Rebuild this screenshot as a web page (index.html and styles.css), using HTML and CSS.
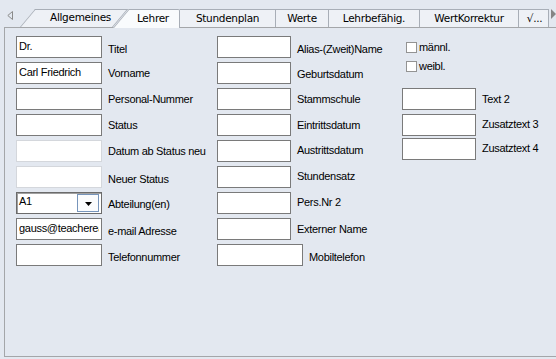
FILE: index.html
```html
<!DOCTYPE html>
<html lang="de">
<head>
    <meta charset="UTF-8">
    <title>Lehrer</title>
    <link rel="stylesheet" href="styles.css">
</head>
<body>
    <div class="tabs">
        <span class="nav nav-left">
            <svg width="6" height="9" viewBox="0 0 6 9"><path d="M5.5 0.5 L0.8 4.5 L5.5 8.5 Z" fill="none" stroke="#8a8a8a" stroke-width="1"/></svg>
        </span>
        <div class="tab tab-first">Allgemeines</div>
        <div class="tab tab-active">Lehrer</div>
        <div class="tab tab-plan">Stundenplan</div>
        <div class="tab tab-werte">Werte</div>
        <div class="tab tab-lehrbef">Lehrbefähig.</div>
        <div class="tab tab-korr">WertKorrektur</div>
        <div class="tab tab-more">√...</div>
        <span class="nav nav-right">
            <svg width="5" height="10" viewBox="0 0 5 10"><path d="M0 0 L5 5 L0 10 Z" fill="#858585"/></svg>
        </span>
    </div>

    <div class="panel">
        <div class="form">
            <div class="col col-1">
                <div class="row"><input class="box" value="Dr."><span class="lbl low">Titel</span></div>
                <div class="row"><input class="box" value="Carl Friedrich"><span class="lbl">Vorname</span></div>
                <div class="row"><input class="box" value=""><span class="lbl">Personal-Nummer</span></div>
                <div class="row"><input class="box" value=""><span class="lbl">Status</span></div>
                <div class="row"><input class="box off" value=""><span class="lbl">Datum ab Status neu</span></div>
                <div class="row"><input class="box off" value=""><span class="lbl low">Neuer Status</span></div>
                <div class="row">
                    <div class="combo">
                        <span class="combo-text">A1</span>
                        <span class="combo-btn">
                            <svg width="7" height="4" viewBox="0 0 7 4"><path d="M0 0 L7 0 L3.5 4 Z" fill="#000"/></svg>
                        </span>
                    </div>
                    <span class="lbl mid">Abteilung(en)</span>
                </div>
                <div class="row"><input class="box" value="gauss@teachereasy.de"><span class="lbl low">e-mail Adresse</span></div>
                <div class="row"><input class="box" value=""><span class="lbl low">Telefonnummer</span></div>
            </div>

            <div class="col col-2">
                <div class="row"><input class="box narrow" value=""><span class="lbl low">Alias-(Zweit)Name</span></div>
                <div class="row"><input class="box narrow" value=""><span class="lbl mid">Geburtsdatum</span></div>
                <div class="row"><input class="box narrow" value=""><span class="lbl">Stammschule</span></div>
                <div class="row"><input class="box narrow" value=""><span class="lbl">Eintrittsdatum</span></div>
                <div class="row"><input class="box narrow" value=""><span class="lbl high">Austrittsdatum</span></div>
                <div class="row"><input class="box narrow" value=""><span class="lbl high">Stundensatz</span></div>
                <div class="row"><input class="box narrow" value=""><span class="lbl high">Pers.Nr 2</span></div>
                <div class="row"><input class="box narrow" value=""><span class="lbl">Externer Name</span></div>
                <div class="row"><input class="box" value=""><span class="lbl low">Mobiltelefon</span></div>
            </div>

            <div class="col col-3">
                <div class="check"><span class="cb"></span><span class="check-lbl">männl.</span></div>
                <div class="check"><span class="cb"></span><span class="check-lbl">weibl.</span></div>
                <div class="row first"><input class="box narrow" value=""><span class="lbl">Text 2</span></div>
                <div class="row"><input class="box narrow" value=""><span class="lbl high">Zusatztext 3</span></div>
                <div class="row tight"><input class="box narrow" value=""><span class="lbl high">Zusatztext 4</span></div>
            </div>
        </div>
    </div>
</body>
</html>
```

FILE: styles.css
```css
/* General Styling */
html, body {
    overflow: hidden;
}
body {
    margin: 0;
    width: 556px;
    height: 359px;
    background: #e3e8f0;
    font-family: 'Liberation Sans', Arial, sans-serif;
    font-size: 11px;
    color: #000000;
}

/* Tab strip */
.tabs {
    position: relative;
    z-index: 2;
    display: flex;
    align-items: flex-end;
    height: 27px;
    font-family: 'DejaVu Sans', Verdana, sans-serif;
    font-size: 10.5px;
    letter-spacing: -0.3px;
}
.nav {
    display: flex;
    flex: none;
    align-self: stretch;
    align-items: center;
}
.nav-left {
    width: 20px;
    padding-left: 7px;
    padding-top: 3px;
    box-sizing: border-box;
}
.nav-right {
    padding-left: 2px;
    padding-top: 1px;
}
.tab {
    position: relative;
    flex: none;
    height: 18px;
    line-height: 16px;
    box-sizing: border-box;
    background: #eef1f6;
    border-top: 1px solid #a8aeb7;
    border-right: 1px solid #a8aeb7;
    text-align: center;
    white-space: nowrap;
}
.tab-plan {
    width: 96px;
}
.tab-werte {
    width: 53px;
}
.tab-lehrbef {
    width: 91px;
}
.tab-korr {
    width: 99px;
}
.tab-more {
    width: 30px;
    padding-left: 2px;
    overflow: hidden;
}
.tab-first {
    width: 93px;
    padding-left: 30px;
    text-align: left;
    background: none;
    border: none;
}
.tab-first::before {
    content: '';
    position: absolute;
    inset: 0;
    z-index: -1;
    background: #eef1f6;
    border: 1px solid #a8aeb7;
    border-bottom: none;
    transform: skewX(-40deg);
    transform-origin: bottom left;
}
.tab-active {
    z-index: 1;
    width: 67px;
    height: 19px;
    margin-bottom: -1px;
    padding: 1px 0 0 24px;
    text-align: left;
    background: none;
    border: none;
}
.tab-active::before,
.tab-active::after {
    content: '';
    position: absolute;
    top: 0;
    bottom: 0;
    z-index: -1;
    background: #f9fbfd;
    border-top: 1px solid #a8aeb7;
}
.tab-active::before {
    left: 0;
    width: 40px;
    border-left: 1px solid #a8aeb7;
    transform: skewX(-40deg);
    transform-origin: bottom left;
}
.tab-active::after {
    left: 22px;
    right: 0;
    border-right: 1px solid #a8aeb7;
    border-top-right-radius: 2px;
}

/* Panel */
.panel {
    width: 552px;
    height: 330px;
    margin-left: 4px;
    box-sizing: border-box;
    border: 1px solid #a4a6a9;
    border-right: none;
}
.form {
    display: flex;
    padding: 8px 0 0 11px;
}
.col {
    display: flex;
    flex-direction: column;
    gap: 4px;
}
.col-1 {
    width: 201px;
}
.col-2 {
    width: 185px;
}
.col-3 {
    gap: 0;
}
.row {
    display: flex;
    align-items: flex-start;
    gap: 6px;
    height: 22px;
}

/* Fields */
.box {
    width: 86px;
    height: 22px;
    margin: 0;
    padding: 0 2px 2px;
    box-sizing: border-box;
    border: 1px solid #7a7a7a;
    background: #ffffff;
    font-family: 'Liberation Sans', Arial, sans-serif;
    font-size: 11px;
    letter-spacing: -0.3px;
    color: #000000;
    outline: none;
}
.box.narrow {
    width: 74px;
}
.box.off {
    border-color: #d4d7dc;
}
.lbl {
    padding-top: 5px;
    line-height: 13px;
    letter-spacing: -0.3px;
    white-space: nowrap;
}
.lbl.low {
    padding-top: 7px;
}
.lbl.mid {
    padding-top: 6px;
}
.lbl.high {
    padding-top: 4px;
}

/* Combo box */
.combo {
    display: flex;
    justify-content: space-between;
    width: 86px;
    height: 22px;
    box-sizing: border-box;
    border: 1px solid #6b6b6b;
    box-shadow: inset 1px 1px 0 #a0a0a0;
    background: #ffffff;
    padding: 1px;
}
.combo-text {
    padding: 1px 0 0 1px;
    line-height: 13px;
    letter-spacing: -0.3px;
}
.combo-btn {
    display: flex;
    align-items: center;
    justify-content: center;
    width: 22px;
    height: 18px;
    margin-right: 1px;
    box-sizing: border-box;
    border: 1px solid #7795bb;
    background: #fbfcfd;
    padding-top: 2px;
}

/* Checkboxes */
.check {
    display: flex;
    align-items: center;
    gap: 2px;
    height: 11px;
    margin: 6px 0 0 4px;
}
.check + .check {
    margin-top: 8px;
}
.cb {
    width: 11px;
    height: 11px;
    box-sizing: border-box;
    border: 1px solid #939393;
    background: #ffffff;
}
.check-lbl {
    line-height: 13px;
    letter-spacing: -0.3px;
}
.col-3 .row {
    margin-top: 4px;
}
.col-3 .row.first {
    margin-top: 16px;
}
.col-3 .row.tight {
    margin-top: 2px;
}
```
